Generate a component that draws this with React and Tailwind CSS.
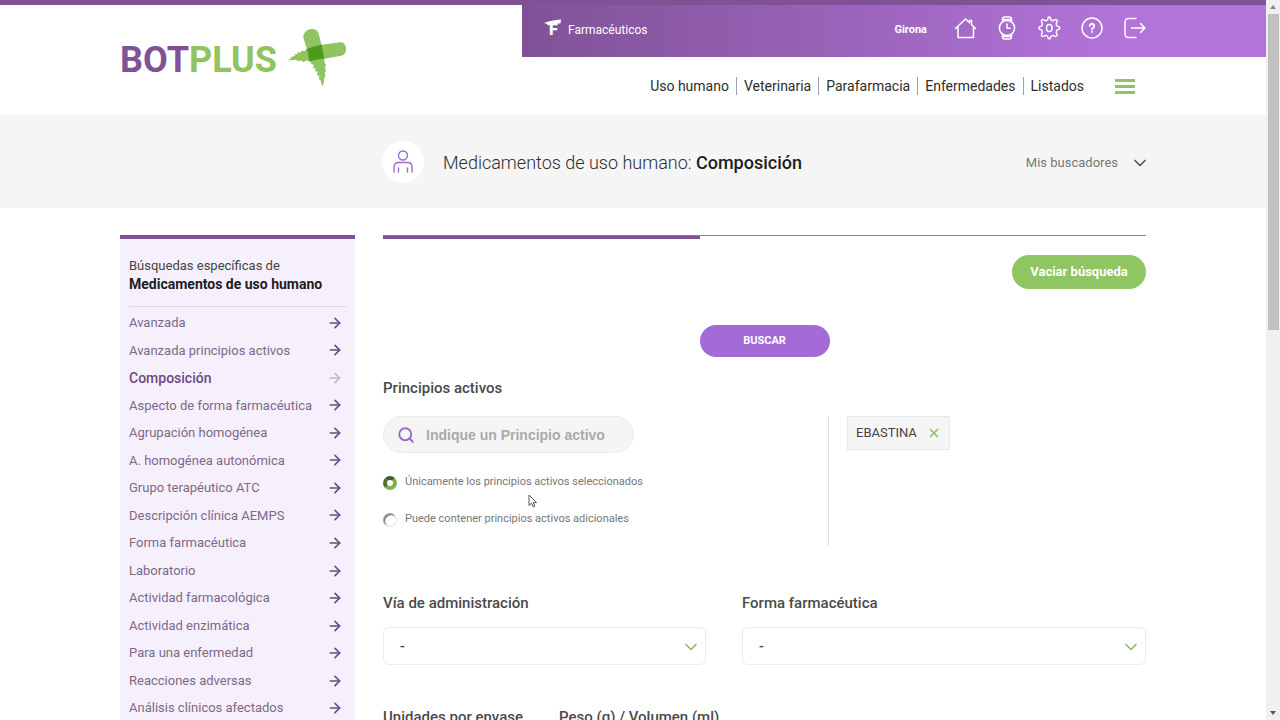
import React, { useState } from "react";
import { ArrowRight, ChevronDown, Search, X } from "lucide-react";

const navItems = ["Uso humano", "Veterinaria", "Parafarmacia", "Enfermedades", "Listados"];

const searches = [
  "Avanzada",
  "Avanzada principios activos",
  "Composición",
  "Aspecto de forma farmacéutica",
  "Agrupación homogénea",
  "A. homogénea autonómica",
  "Grupo terapéutico ATC",
  "Descripción clínica AEMPS",
  "Forma farmacéutica",
  "Laboratorio",
  "Actividad farmacológica",
  "Actividad enzimática",
  "Para una enfermedad",
  "Reacciones adversas",
  "Análisis clínicos afectados",
];

const iconProps = {
  fill: "none",
  stroke: "currentColor",
  strokeWidth: 1.5,
  strokeLinecap: "round",
  strokeLinejoin: "round",
  width: 24,
  height: 26,
  viewBox: "0 0 24 26",
};

function HomeIcon() {
  return (
    <svg {...iconProps}>
      <path d="M1.500 13.500 11.500 4l4 3.800V5.500h2v4.200l4 3.800M4 12v10.500h15.500V12" />
    </svg>
  );
}

function WatchIcon() {
  return (
    <svg {...iconProps}>
      <circle cx="11" cy="13" r="7.6" />
      <path d="M6.500 6.500V4q0-2 2-2h5q2 0 2 2v2.500M6.500 19.500V22q0 2 2 2h5q2 0 2-2v-2.500M6.500 4.500h9M6.500 21.500h9M11 9v4.300h3.200" />
    </svg>
  );
}

function GearIcon() {
  return (
    <svg {...iconProps}>
      <path d="M8.700 5.500Q10 5 10 3.500Q10 2 11.200 2Q12.500 2 12.500 3.500Q12.500 5 14 5.500Q15.300 6 16.400 5Q17.600 4 18.700 5Q19.800 6.200 18.800 7.400Q17.900 8.600 18.400 9.900Q18.900 11.300 20.300 11.400Q21.700 11.700 21.700 13Q21.700 14.400 20.300 14.600Q18.900 14.800 18.400 16.200Q17.900 17.500 18.800 18.700Q19.800 19.900 18.700 21Q17.600 22 16.400 21Q15.300 20.100 14 20.600Q12.500 21.100 12.500 22.600Q12.500 24 11.200 24Q10 24 10 22.600Q10 21.100 8.700 20.600Q7.300 20.100 6.200 21Q4.900 22 3.900 21Q2.800 19.900 3.700 18.700Q4.700 17.500 4.200 16.200Q3.700 14.800 2.300 14.600Q.9 14.400.9 13Q.9 11.700 2.300 11.400Q3.700 11.300 4.200 9.900Q4.700 8.600 3.700 7.400Q2.800 6.200 3.900 5Q4.900 4 6.200 5Q7.300 6 8.700 5.500Z" />
      <ellipse cx="11.300" cy="13" rx="2.800" ry="3.600" />
    </svg>
  );
}

function HelpIcon() {
  return (
    <svg {...iconProps}>
      <circle cx="12" cy="13" r="10" />
      <path d="M9.800 10.800a2.200 2.200 0 1 1 3.400 2c-.9.500-1.200.8-1.200 1.500M12 16.800v.1" strokeWidth="1.9" />
    </svg>
  );
}

function LogoutIcon() {
  return (
    <svg {...iconProps}>
      <path d="M14 3.500H6.500a3.500 3.500 0 0 0-3.500 3.500v12a3.500 3.500 0 0 0 3.500 3.500H14M9.500 13H23M18.500 8.500 23 13l-4.500 4.500" />
    </svg>
  );
}

const tools = [
  { label: "Inicio", Icon: HomeIcon },
  { label: "Guardia", Icon: WatchIcon },
  { label: "Ajustes", Icon: GearIcon },
  { label: "Ayuda", Icon: HelpIcon },
  { label: "Salir", Icon: LogoutIcon },
];

function Logo() {
  return (
    <a href="#" className="flex items-start pt-[23px]">
      <span className="text-4xl leading-[64px] font-bold text-[#7f5296]">
        BOT<span className="font-bold text-[#8fc460]">PLUS</span>
      </span>
      <svg className="ml-2.5 h-[59px] w-[60px]" viewBox="0 0 180 176">
        <path
          fill="#8fc460"
          d="M49 28Q49 8 68 3Q89 0 95 16L104 52L112 94L113 104L117 110L114 118L117 128L113 134L115 144L111 152L111 162L107 174L103 166L101 156L96 154L97 143L90 142L92 130L84 130L86 120L78 120L80 110L73 108L66 80L55 48Z"
        />
        <path
          fill="#8fc460"
          d="M160 42Q174 42 177 58Q179 78 163 83L112 92L66 100L58 96L50 102L42 97L32 99L27 95L1 97L14 90L10 87L26 83L20 79L33 77L29 73L42 72L44 67L54 69L58 61L104 50Z"
        />
        <path fill="#4f9a1d" d="M61 62L82 54L104 50L112 92L90 94L67 100Z" />
      </svg>
    </a>
  );
}

function Header() {
  return (
    <header className="border-t-[5px] border-[#7f5296]">
      <div className="grid h-[110px] grid-cols-[1fr_402px_624px_1fr] grid-rows-[52px_58px]">
        <div className="col-start-2 row-span-2">
          <Logo />
        </div>

        {/* Purple bar */}
        <div className="col-span-2 col-start-3 row-start-1 grid grid-cols-[624px_1fr] bg-linear-to-r from-[#7f5296] to-[#b273da] to-80% text-white">
          <div className="flex items-center pb-1.5 pl-[22px]">
            <svg width="18" height="22" viewBox="0 0 18 22" fill="currentColor">
              <path d="M0 6Q7 3 17 2.500L16.500 6.500Q8 6 4 8.500Q4 7 0 6Z" />
              <text x="5" y="18" fontSize="16" fontWeight="900" fontFamily="Roboto">
                F
              </text>
            </svg>
            <a href="#" className="pt-1 pl-1.5 text-xs">
              Farmacéuticos
            </a>
            <span className="ml-auto pt-1 pr-[27px] text-[11px] font-bold">Girona</span>
            <div className="flex gap-[18px]">
              {tools.map(({ label, Icon }) => (
                <button key={label} aria-label={label}>
                  <Icon />
                </button>
              ))}
            </div>
          </div>
        </div>

        {/* Main nav */}
        <nav className="col-start-3 row-start-2 flex items-center justify-end pr-[11px] text-sm text-[#2d2d2d]">
          {navItems.map((item) => (
            <a
              key={item}
              href="#"
              className="border-l border-gray-400 px-[7px] leading-[18px] first:border-l-0"
            >
              {item}
            </a>
          ))}
          <button aria-label="Menú" className="ml-6 flex w-5 flex-col gap-[3px]">
            <span className="h-[3px] bg-[#8fc460]" />
            <span className="h-[3px] bg-[#8fc460]" />
            <span className="h-[3px] bg-[#8fc460]" />
          </button>
        </nav>
      </div>
    </header>
  );
}

function TitleBar() {
  return (
    <div className="bg-[#f5f5f5]">
      <div className="mx-auto flex h-[93px] max-w-[1026px] items-center pl-[262px]">
        <span className="flex size-[42px] items-center justify-center rounded-full bg-white">
          <svg
            width="22"
            height="24"
            viewBox="0 0 22 24"
            fill="none"
            stroke="#9b6bc4"
            strokeWidth="1.4"
            strokeLinecap="round"
          >
            <circle cx="11" cy="5.500" r="4.500" />
            <path d="M2 22V17q0-4.500 4.500-4.500h9q4.500 0 4.500 4.500v5M6.500 18v4M15.500 18v4" />
          </svg>
        </span>
        <h1 className="ml-[19px] pt-0.5 text-lg text-[#2d2d2d]">
          <span className="font-light">Medicamentos de uso humano: </span>
          <span className="font-medium text-[#1d1d1d]">Composición</span>
        </h1>
        <button className="ml-auto flex items-center gap-3 pt-0.5 text-[13px] text-[#777]">
          Mis buscadores
          <ChevronDown className="-mr-1 size-5 text-[#555]" strokeWidth={2} />
        </button>
      </div>
    </div>
  );
}

function Sidebar() {
  return (
    <aside className="w-[235px] shrink-0 border-t-4 border-[#7f5296] bg-[#f6f0fd] px-[9px]">
      <h2 className="border-b border-[#ddd6e4] pt-[18px] pb-3 text-[13px] leading-[18px] text-[#444]">
        Búsquedas específicas de
        <br />
        <strong className="text-sm leading-[18px] font-bold text-[#1d1d1d]">
          Medicamentos de uso humano
        </strong>
      </h2>
      <ul className="mt-0.5 grid h-[413px] auto-rows-fr text-[13px] text-[#7d6988]">
        {searches.map((item) => {
          const current = item === "Composición";
          return (
            <li key={item} className="flex items-center">
              <a
                href="#"
                className={`flex flex-1 items-center justify-between pr-[3px] ${
                  current ? "text-sm font-medium text-[#6b4a80]" : ""
                }`}
              >
                {item}
                <ArrowRight
                  className={`size-4 ${current ? "text-[#c3b8cb]" : "text-[#6b4a80]"}`}
                  strokeWidth={2.5}
                />
              </a>
            </li>
          );
        })}
      </ul>
    </aside>
  );
}

function SelectField({ id, label }) {
  return (
    <div>
      <label htmlFor={id} className="block text-[15px] leading-5 font-medium text-[#4a4a4a]">
        {label}
      </label>
      <div className="relative mt-3.5">
        <select
          id={id}
          className="h-[38px] w-full appearance-none rounded-md border border-[#ececec] bg-white px-4 text-sm font-medium text-[#444]"
        >
          <option>-</option>
        </select>
        <ChevronDown
          className="pointer-events-none absolute top-2.5 right-[5px] size-5 text-[#8fb86a]"
          strokeWidth={2}
        />
      </div>
    </div>
  );
}

function Radio({ label, checked, onChange }) {
  return (
    <label className="flex h-[37px] items-center gap-2 text-[11px] text-[#777]">
      <input
        type="radio"
        name="modo"
        checked={checked}
        onChange={onChange}
        className="size-3.5 appearance-none rounded-full border border-gray-400 border-r-gray-200 border-b-gray-200 bg-white shadow-[inset_1px_1px_1px_#555] checked:border-4 checked:border-[#7fb04f] checked:border-t-[#3f5f26] checked:border-l-[#4b7030] checked:shadow-none"
      />
      {label}
    </label>
  );
}

function SearchForm() {
  const [mode, setMode] = useState("solo");

  return (
    <main className="min-w-0 flex-1">
      {/* Progress */}
      <div className="h-1 border-t border-[#8d7c98]">
        <div className="h-[3px] w-[317px] bg-[#7f5296]" />
      </div>

      <div className="mt-4 flex justify-end">
        <button className="h-[34px] w-[134px] rounded-full bg-[#8fc663] text-[13px] font-bold text-white">
          Vaciar búsqueda
        </button>
      </div>
      <div className="mt-9 flex justify-center">
        <button className="h-8 w-[130px] rounded-full bg-[#a46bd6] text-[11px] font-bold text-white">
          BUSCAR
        </button>
      </div>

      <div className="mt-[21px]">
        <label htmlFor="principio" className="block text-[15px] leading-5 font-medium text-[#4a4a4a]">
          Principios activos
        </label>
        <div className="mt-[18px] flex">
          <div className="h-[130px] w-[446px] border-r border-[#ddd]">
            <div className="relative w-[251px]">
              <Search
                className="absolute top-2.5 left-3.5 size-[18px] text-[#9b6bc4]"
                strokeWidth={2.5}
              />
              <input
                id="principio"
                placeholder="Indique un Principio activo"
                className="h-[37px] w-full rounded-full border border-[#ececec] bg-[#f5f5f5] pl-[42px] font-['Liberation_Sans',sans-serif] text-sm font-bold placeholder:text-[#aaa]"
              />
            </div>
            <div className="relative mt-[11px]">
              <Radio
                label="Únicamente los principios activos seleccionados"
                checked={mode === "solo"}
                onChange={() => setMode("solo")}
              />
              <Radio
                label="Puede contener principios activos adicionales"
                checked={mode === "mas"}
                onChange={() => setMode("mas")}
              />
              {/* Mouse pointer */}
              <svg
                className="pointer-events-none absolute top-[30px] left-[145px]"
                width="10"
                height="14"
                viewBox="0 0 10 14"
              >
                <path
                  d="M1 1v10.500l2.500-2.300 1.700 3.800 1.700-.8-1.700-3.600H8.500z"
                  fill="#fff"
                  stroke="#555"
                />
              </svg>
            </div>
          </div>
          <div className="pl-[18px]">
            <span className="flex h-[34px] items-center gap-2.5 border border-[#e8e8e8] bg-[#f5f5f5] px-2 text-[13px] text-[#444]">
              EBASTINA
              <button aria-label="Quitar EBASTINA" className="text-[#8fc460]">
                <X className="size-3.5" strokeWidth={3} />
              </button>
            </span>
          </div>
        </div>
      </div>

      <div className="mt-[47px] grid grid-cols-[323px_1fr] gap-9">
        <SelectField id="via" label="Vía de administración" />
        <SelectField id="forma" label="Forma farmacéutica" />
      </div>
      <div className="mt-[42px] grid grid-cols-[140px_1fr] gap-9">
        <SelectField id="unidades" label="Unidades por envase" />
        <SelectField id="peso" label="Peso (g) / Volumen (ml)" />
      </div>
    </main>
  );
}

function Scrollbar() {
  return (
    <div className="flex w-3.5 shrink-0 flex-col items-center bg-[#f0f0f0]">
      <svg className="my-1 h-1.5 w-2" viewBox="0 0 8 6" fill="#888">
        <path d="M1 5 4 1l3 4z" />
      </svg>
      <div className="h-[316px] w-[11px] bg-[#c1c1c1]" />
      <svg className="mt-auto mb-1 h-1.5 w-2" viewBox="0 0 8 6" fill="#555">
        <path d="M1 1l3 4 3-4z" />
      </svg>
    </div>
  );
}

function App() {
  return (
    <div className="flex h-screen overflow-hidden bg-white font-[Roboto,sans-serif]">
      <div className="min-w-0 flex-1 overflow-hidden">
        <Header />
        <TitleBar />
        <div className="mx-auto mt-[27px] flex max-w-[1026px] gap-7">
          <Sidebar />
          <SearchForm />
        </div>
      </div>
      <Scrollbar />
    </div>
  );
}

export default App;
